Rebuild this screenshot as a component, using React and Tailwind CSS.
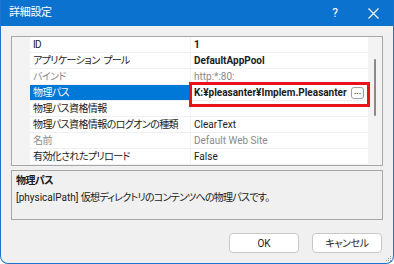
const rows = [
  { name: "ID", value: "1", bold: true },
  { name: "アプリケーション\u00a0\u00a0プール", value: "DefaultAppPool", bold: true },
  { name: "バインド", value: "http:*:80:", dim: true },
  { name: "物理パス", value: "K:¥pleasanter¥Implem.Pleasanter", bold: true, selected: true },
  { name: "物理パス資格情報", value: "" },
  { name: "物理パス資格情報のログオンの種類", value: "ClearText" },
  { name: "名前", value: "Default Web Site", dim: true },
  { name: "有効化されたプリロード", value: "False" },
];

function Row({ row }) {
  return (
    <div className="flex h-[16px]">
      <div className="w-[18px] shrink-0 bg-[#f3f3f3]" />
      <div
        className={`flex w-[160px] shrink-0 items-center overflow-hidden whitespace-nowrap border-b border-[#eef0f3] pl-[3px] tracking-[-0.6px] ${
          row.selected ? "bg-[#0078d7] text-white" : row.dim ? "text-[#8a8a8a]" : "text-[#1a1a1a]"
        }`}
      >
        {row.name}
      </div>
      <div className="flex min-w-0 flex-1 items-center whitespace-nowrap border-b border-l border-[#eef0f3] pl-[3px]">
        <span
          className={`${row.bold ? "font-bold" : ""} ${row.dim ? "text-[#8a8a8a]" : "text-[#1a1a1a]"}`}
        >
          {row.value}
        </span>
        {row.selected && (
          <span className="ml-auto mr-[4px] flex h-[12px] w-[13px] items-end justify-center rounded-[3px] border border-[#a0a0a0] bg-white pb-[2px] text-[8px] font-bold leading-none text-[#333]">
            ...
          </span>
        )}
      </div>
    </div>
  );
}

export default function App() {
  return (
    <div className="relative flex h-[264px] w-[394px] flex-col overflow-hidden rounded-b-[8px] border border-t-0 border-[#1c74cf] bg-[#f0f0f0] font-['Roboto','Noto_Sans_CJK_JP',sans-serif] text-[10px] [font-feature-settings:'palt']">
      <div className="flex h-[26px] shrink-0 items-center bg-[#0b72cf] text-white">
        <span className="ml-[8px] flex-1 text-[11px] tracking-[-0.3px]">詳細設定</span>
        <span className="flex w-[38px] justify-center text-[12px]">?</span>
        <span className="mr-[1px] flex w-[38px] justify-center">
          <svg width="11" height="11" viewBox="0 0 11 11">
            <path d="M0.5 0.5 L10.5 10.5 M10.5 0.5 L0.5 10.5" stroke="white" strokeWidth="1.1" />
          </svg>
        </span>
      </div>

      <div className="flex flex-1 flex-col px-[10px] pt-[10px]">
        <div className="relative flex h-[130px] border border-[#a7a7a7] bg-white">
          <div className="min-w-0 flex-1">
            {rows.map((row) => (
              <Row key={row.name} row={row} />
            ))}
          </div>
          <div className="relative w-[14px] bg-[#f3f3f3]">
            <div className="absolute left-[6px] top-[22px] h-[57px] w-[2px] rounded-full bg-[#8a8a8a]" />
          </div>
          <div className="absolute left-[177px] top-[45px] h-[25px] w-[181px] border-[3px] border-[#e8141c]" />
        </div>

        <div className="mt-[4px] flex h-[50px] flex-col border border-[#a7a7a7] px-[4px] pt-[1px] text-[#1a1a1a]">
          <span className="font-bold leading-[17px] tracking-[-0.6px]">物理パス</span>
          <span className="whitespace-nowrap leading-[17px]">
            [physicalPath] <span className="tracking-[-0.75px]">仮想ディレクトリのコンテンツへの物理パスです。</span>
          </span>
        </div>

        <div className="mt-[13px] flex justify-end gap-[13px] pr-[1px]">
          <button className="h-[20px] w-[70px] rounded-[4px] border border-[#c8c8c8] bg-white text-[10px] text-[#1a1a1a]">
            OK
          </button>
          <button className="h-[20px] w-[70px] rounded-[4px] border border-[#c8c8c8] bg-white text-[10px] tracking-[-0.4px] text-[#1a1a1a]">
            キャンセル
          </button>
        </div>
      </div>

      <div className="absolute bottom-[2px] right-[2px] grid grid-cols-3 gap-[1px]">
        <span className="h-[1px] w-[1px]" />
        <span className="h-[1px] w-[1px]" />
        <span className="h-[1px] w-[1px] bg-[#9a9a9a]" />
        <span className="h-[1px] w-[1px]" />
        <span className="h-[1px] w-[1px] bg-[#9a9a9a]" />
        <span className="h-[1px] w-[1px] bg-[#9a9a9a]" />
        <span className="h-[1px] w-[1px] bg-[#9a9a9a]" />
        <span className="h-[1px] w-[1px] bg-[#9a9a9a]" />
        <span className="h-[1px] w-[1px] bg-[#9a9a9a]" />
      </div>
    </div>
  );
}
